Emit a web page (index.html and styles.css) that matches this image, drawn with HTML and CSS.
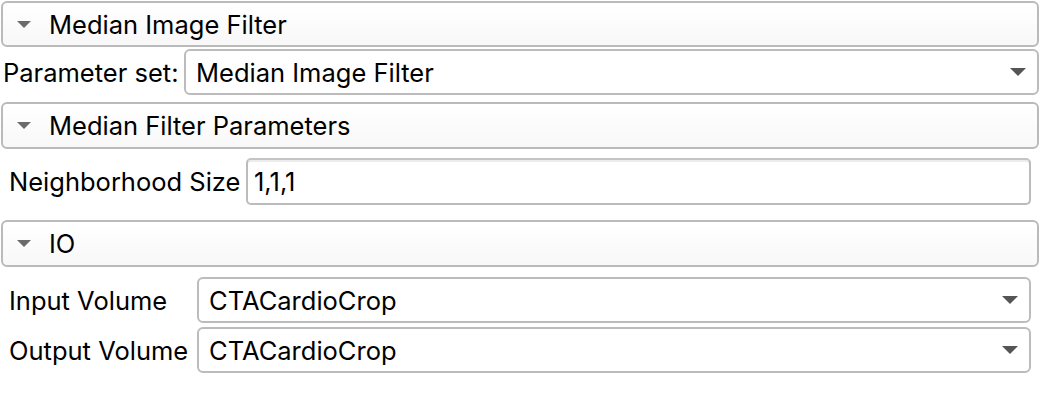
FILE: index.html
```html
<!DOCTYPE html>
<html>
<head>
<meta charset="utf-8">
<link rel="stylesheet" href="styles.css">
</head>
<body>
<div class="panel">
  <div class="section-header h1"><span class="caret"></span><span>Median Image Filter</span></div>
  <div class="param-row">
    <span class="label param-label">Parameter set:</span>
    <div class="combo">Median Image Filter<span class="arrow"></span></div>
  </div>
  <div class="section-header h2"><span class="caret"></span><span>Median Filter Parameters</span></div>
  <div class="nb-row">
    <span class="label nb-label">Neighborhood Size</span>
    <div class="lineedit">1,1,1</div>
  </div>
  <div class="section-header h3"><span class="caret"></span><span>IO</span></div>
  <div class="io-grid">
    <span class="label">Input Volume</span>
    <div class="combo">CTACardioCrop<span class="arrow"></span></div>
    <span class="label">Output Volume</span>
    <div class="combo">CTACardioCrop<span class="arrow"></span></div>
  </div>
</div>
</body>
</html>
```
FILE: styles.css
```css
* { box-sizing: border-box; }
html, body { margin: 0; padding: 0; background: #ffffff; }
body {
  font-family: Inter, "Liberation Sans", Arial, sans-serif;
  font-size: 25.5px;
  color: #000;
  width: 1042px;
  height: 402px;
  overflow: hidden;
}
.panel {
  padding: 1px 3px 0 1px;
  display: flex;
  flex-direction: column;
}
.section-header {
  height: 46px;
  border: 2px solid #bababa;
  border-radius: 6px;
  background: linear-gradient(#ffffff, #f8f8f8);
  display: flex;
  align-items: center;
  padding-left: 14px;
}
.caret {
  width: 0; height: 0;
  border-left: 7px solid transparent;
  border-right: 7px solid transparent;
  border-top: 7px solid #6b6b6b;
  margin-right: 18px;
}
.h2 { margin-top: 7px; height: 47px; }
.h3 { margin-top: 15px; height: 47px; }
.param-row {
  margin-top: 2px;
  display: flex;
  align-items: center;
  gap: 8px;
  padding-left: 2px;
}
.param-label { width: 173px; flex: none; white-space: nowrap; }
.combo {
  flex: 1;
  height: 46px;
  border: 2px solid #bcbcbc;
  border-radius: 6px;
  background: #ffffff;
  display: flex;
  align-items: center;
  padding-left: 10px;
  position: relative;
}
.arrow {
  position: absolute;
  right: 11px;
  top: 50%;
  margin-top: -4px;
  width: 0; height: 0;
  border-left: 8px solid transparent;
  border-right: 8px solid transparent;
  border-top: 8px solid #555555;
}
.nb-row {
  margin-top: 9px;
  display: flex;
  align-items: center;
  gap: 8px;
  padding-left: 8px;
  padding-right: 8px;
}
.nb-label { width: 229px; flex: none; white-space: nowrap; }
.lineedit {
  flex: 1;
  height: 47px;
  border: 2px solid #bcbcbc;
  border-top-color: #c4c4c4;
  border-radius: 5px;
  background: #ffffff;
  box-shadow: inset 0 2px 0 #ececec;
  display: flex;
  align-items: center;
  padding-left: 6px;
}
.io-grid {
  margin-top: 10px;
  display: grid;
  grid-template-columns: 180px 1fr;
  column-gap: 8px;
  row-gap: 4px;
  padding-left: 8px;
  padding-right: 8px;
  align-items: center;
}
.io-grid .combo { height: 46px; }
.label { white-space: nowrap; }
```
